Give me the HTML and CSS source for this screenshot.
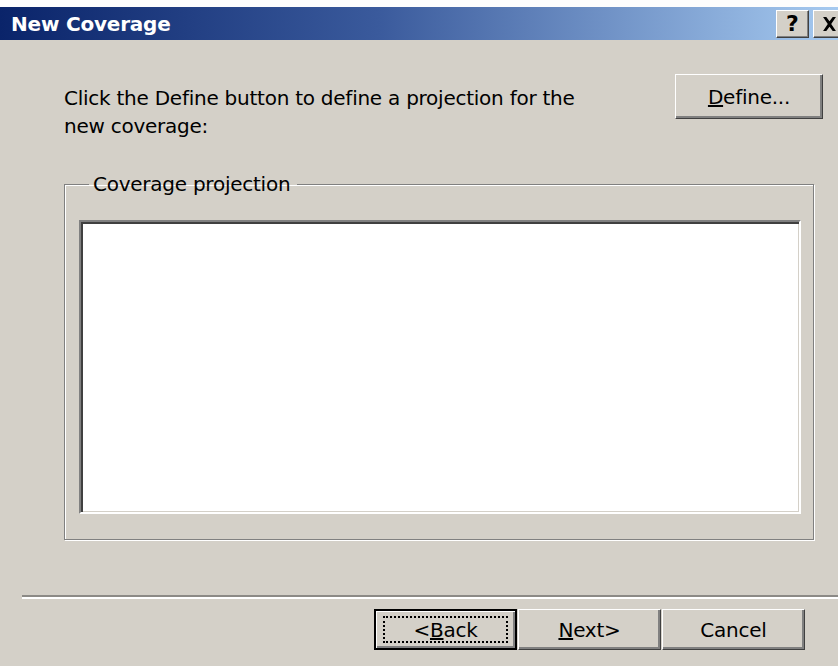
FILE: index.html
```html
<!DOCTYPE html>
<html>
<head>
<meta charset="utf-8">
<link rel="stylesheet" href="styles.css">
<title>New Coverage</title>
</head>
<body>
<div class="dialog">
  <div class="titlebar">
    <span class="title">New Coverage</span>
    <div class="caption-buttons">
      <button class="cap-btn">?</button>
      <button class="cap-btn close">
        <svg width="15" height="14" viewBox="0 0 14 13"><path d="M1 0h3l3 4 3-4h3L8.6 6.5 13 13h-3L7 9 4 13H1l4.4-6.5z" fill="#000"/></svg>
      </button>
    </div>
  </div>

  <div class="body">
    <div class="intro">
      <p class="intro-text">Click the Define button to define a projection for the new coverage:</p>
      <button class="btn define"><u>D</u>efine...</button>
    </div>

    <fieldset class="group">
      <legend>Coverage projection</legend>
      <div class="projection-box"></div>
    </fieldset>
  </div>

  <div class="separator"></div>

  <div class="footer">
    <button class="btn default"><span class="focus">&lt;<u>B</u>ack</span></button>
    <button class="btn"><u>N</u>ext&gt;</button>
    <button class="btn cancel">Cancel</button>
  </div>
</div>
</body>
</html>
```

FILE: styles.css
```css
html, body {
  margin: 0;
  padding: 0;
}

body {
  width: 838px;
  height: 666px;
  overflow: hidden;
  background: #fdfdfd;
  font-family: "DejaVu Sans", Tahoma, sans-serif;
  color: #000;
}

.dialog {
  margin-top: 7px;
  height: 659px;
  background: #d4d0c8;
  display: flex;
  flex-direction: column;
}

.titlebar {
  height: 33px;
  flex: none;
  background: linear-gradient(to right, #0a246a 0%, #3a5a9c 45%, #a6caf0 100%);
  display: flex;
  align-items: center;
  justify-content: space-between;
  padding-left: 11px;
  box-sizing: border-box;
}

.title {
  color: #fff;
  font-weight: bold;
  font-size: 20px;
  letter-spacing: -0.2px;
}

.caption-buttons {
  display: flex;
  gap: 4px;
  align-self: flex-start;
  margin-top: 3px;
  margin-right: -8px;
}

.cap-btn {
  width: 33px;
  height: 28px;
  padding: 0;
  background: #d4d0c8;
  border: 1px solid;
  border-color: #fff #404040 #404040 #fff;
  box-shadow: inset -1px -1px 0 #808080;
  font-family: "DejaVu Sans", sans-serif;
  font-weight: bold;
  font-size: 22px;
  line-height: 1;
  display: flex;
  align-items: center;
  justify-content: center;
}

.body {
  padding: 0 24px 0 64px;
  display: flex;
  flex-direction: column;
}

.intro {
  display: flex;
  justify-content: space-between;
  align-items: flex-start;
  padding-top: 44px;
}

.intro-text {
  margin: 0;
  width: 530px;
  font-size: 20px;
  line-height: 28px;
  letter-spacing: -0.25px;
}

.btn {
  width: 143px;
  height: 41px;
  padding: 0;
  background: #d4d0c8;
  border: 1px solid;
  border-color: #fff #404040 #404040 #fff;
  box-shadow: inset -2px -2px 0 #808080;
  font-family: "DejaVu Sans", Tahoma, sans-serif;
  font-size: 20px;
  color: #000;
  letter-spacing: -0.25px;
}

.define {
  width: 148px;
  height: 45px;
  margin-top: -10px;
  margin-right: -9px;
}

.group {
  margin: 32px 0 0 0;
  padding: 24px 12px 25px 14px;
  border: 1px solid #808080;
  box-shadow: 1px 1px 0 #fff, inset 1px 1px 0 #fff;
}

.group legend {
  padding: 0 7px 0 4px;
  margin-left: 10px;
  font-size: 20px;
  line-height: 24px;
  letter-spacing: -0.25px;
}

.projection-box {
  height: 294px;
  background: #fff;
  border: 2px solid;
  border-color: #808080 #fff #fff #808080;
  box-shadow: inset 2px 2px 0 #404040, inset -1px -1px 0 #d4d0c8;
  box-sizing: border-box;
}

.separator {
  flex: none;
  margin: 55px 0 0 22px;
  height: 0;
  border-top: 2px solid #8c8a86;
  border-bottom: 2px solid #fff;
}

.footer {
  display: flex;
  padding: 10px 0 0 374px;
}

.footer .btn + .btn {
  margin-left: 1px;
}

.footer .cancel {
  margin-left: 31px;
}

.default {
  border: 2px solid #000;
  box-shadow: inset 1px 1px 0 #fff, inset -2px -2px 0 #808080;
  display: flex;
  align-items: center;
  justify-content: center;
}

.focus {
  display: block;
  width: 125px;
  height: 27px;
  line-height: 25px;
  border: 2px dotted #000;
  box-sizing: border-box;
}
```
